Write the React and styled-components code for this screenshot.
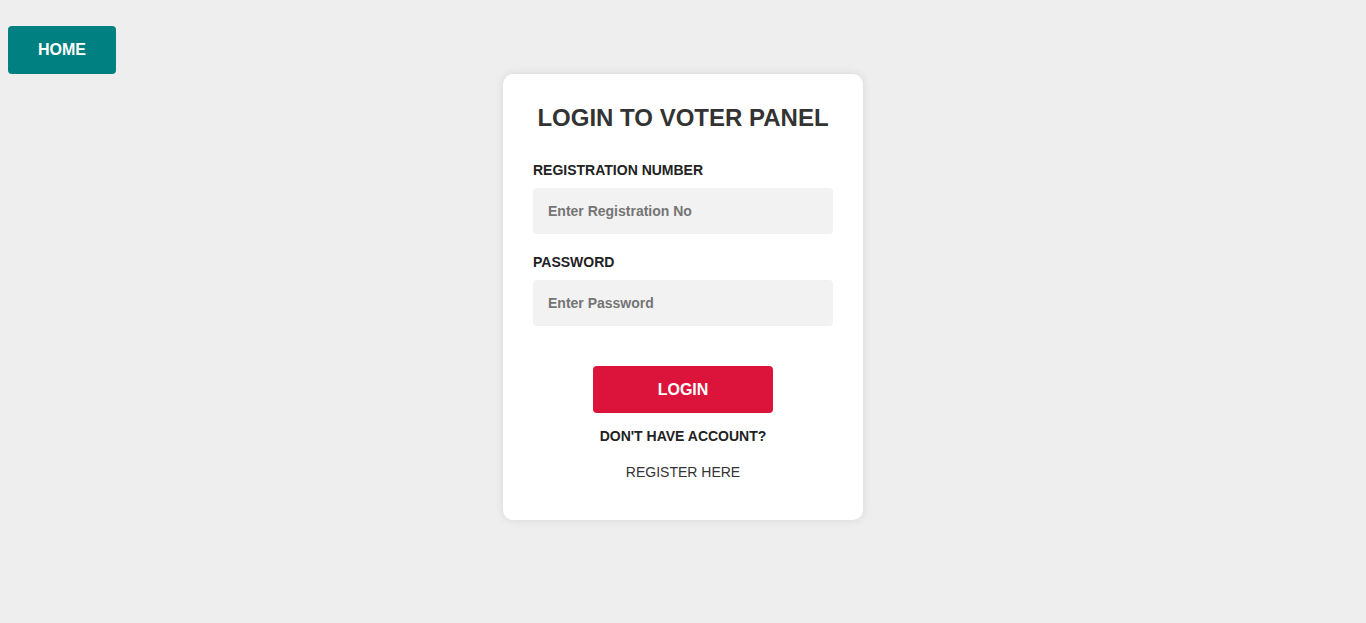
import React from "react";
import styled, { createGlobalStyle } from "styled-components";

const Global = createGlobalStyle`
  html, body { margin: 0; padding: 0; background: #eeeeee; }
  body { font-family: "Liberation Sans", Arial, sans-serif; }
  * { box-sizing: border-box; }
`;

const Page = styled.div`
  min-height: 623px;
  padding: 26px 8px 0;
  display: flex;
  flex-direction: column;
`;

const TopBar = styled.div`
  display: flex;
  height: 48px;
`;

const HomeButton = styled.button`
  width: 108px;
  height: 48px;
  border: none;
  border-radius: 4px;
  background: #008080;
  color: #fff;
  font-family: inherit;
  font-weight: bold;
  font-size: 16px;
  cursor: pointer;
`;

const Center = styled.div`
  display: flex;
  justify-content: center;
`;

const Card = styled.form`
  width: 360px;
  background: #fff;
  border-radius: 10px;
  box-shadow: 0 0 10px rgba(0, 0, 0, 0.1);
  padding: 30px 30px 40px;
  display: flex;
  flex-direction: column;
`;

const Title = styled.h2`
  margin: 0 0 30px;
  text-align: center;
  font-size: 24px;
  line-height: 28px;
  font-weight: bold;
  color: #333;
`;

const Label = styled.label`
  font-size: 14px;
  line-height: 16px;
  font-weight: bold;
  color: #222;
  margin-bottom: 10px;
`;

const Input = styled.input`
  width: 300px;
  height: 46px;
  border: none;
  border-radius: 4px;
  background: #f2f2f2;
  padding: 0 15px;
  font-family: inherit;
  font-size: 14px;
  font-weight: bold;
  color: #333;
  margin-bottom: ${(p) => p.$gap}px;
  outline: none;
  &::placeholder { color: #757575; }
`;

const LoginButton = styled.button`
  align-self: center;
  width: 180px;
  height: 47px;
  border: none;
  border-radius: 4px;
  background: #dc143c;
  color: #fff;
  font-family: inherit;
  font-weight: bold;
  font-size: 16px;
  cursor: pointer;
  margin-bottom: 15px;
`;

const Note = styled.p`
  margin: 0 0 ${(p) => (p.$last ? 0 : 20)}px;
  text-align: center;
  font-size: 14px;
  line-height: 16px;
  font-weight: ${(p) => (p.$bold ? "bold" : "normal")};
  color: #222;
`;

const Link = styled.a`
  color: #333;
  text-decoration: none;
`;

export default function App() {
  return (
    <>
      <Global />
      <Page>
        <TopBar>
          <HomeButton type="button">HOME</HomeButton>
        </TopBar>
        <Center>
          <Card onSubmit={(e) => e.preventDefault()}>
            <Title>LOGIN TO VOTER PANEL</Title>
            <Label>REGISTRATION NUMBER</Label>
            <Input placeholder="Enter Registration No" $gap={20} />
            <Label>PASSWORD</Label>
            <Input type="password" placeholder="Enter Password" $gap={40} />
            <LoginButton type="submit">LOGIN</LoginButton>
            <Note $bold>DON'T HAVE ACCOUNT?</Note>
            <Note $last>
              <Link href="#">REGISTER HERE</Link>
            </Note>
          </Card>
        </Center>
      </Page>
    </>
  );
}
